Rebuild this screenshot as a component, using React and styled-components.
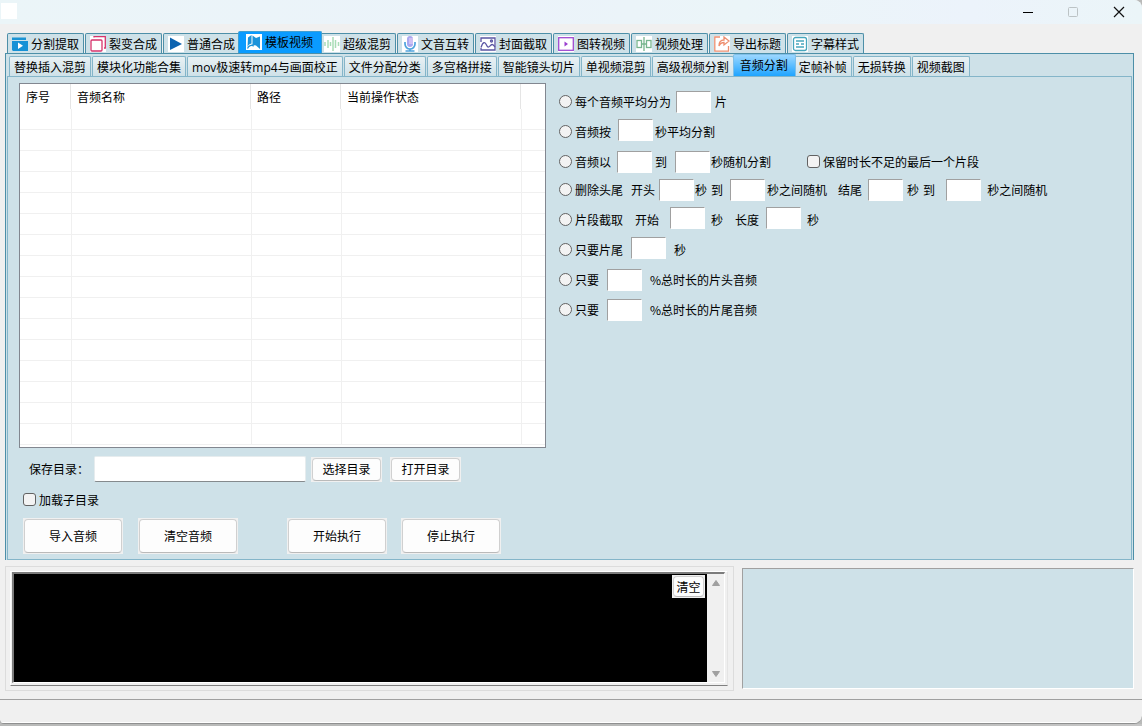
import React from "react";
import styled, { createGlobalStyle, css } from "styled-components";

const SURFACE = "#cee1e8";
const CHROME = "#f0f0f0";
const FRAME = "#4d8fa8";
const FRAME_SOFT = "#84b5c9";

const GlobalStyle = createGlobalStyle`
  *, *::before, *::after { box-sizing: border-box; }
  body {
    margin: 0;
    background: #b9bab9;
    color: #000;
    font: 12px/16px "Noto Sans CJK SC", sans-serif;
  }
  button, input { font: inherit; color: inherit; }
`;

const Screen = styled.div`
  min-height: 100vh;
  min-width: 1100px;
  display: flex;
  flex-direction: column;
`;

const Window = styled.div`
  flex: 1;
  display: flex;
  flex-direction: column;
  background: ${CHROME};
  border-radius: 0 8px 8px 4px;
  border-bottom: 1px solid #8f9090;
  overflow: hidden;
`;

const TitleBar = styled.header`
  display: flex;
  justify-content: space-between;
  height: 24px;
  background: linear-gradient(90deg, #ebf5f8, #ebf3fa 45%, #ebf5f8 65%, #ecf3fb 85%, #ebf5f8);
`;

const AppBadge = styled.span`
  width: 16px;
  height: 16px;
  margin: 3px 0 0 1px;
  background: #fff;
`;

const WindowControls = styled.div`
  display: flex;
`;

const WindowButton = styled.button`
  width: 46px;
  height: 23px;
  padding: 0;
  border: 0;
  background: none;
  display: grid;
  place-items: center;
`;

const Main = styled.main`
  flex: 1;
  display: flex;
  flex-direction: column;
  padding: 7px 8px 8px 5px;
`;

const TabBar = styled.div`
  display: flex;
  align-items: flex-end;
  gap: 1px;
  padding-left: 2px;
  height: 22px;
`;

const tabBase = css`
  display: flex;
  align-items: center;
  flex: none;
  white-space: nowrap;
  border-radius: 2px 2px 0 0;
  border-bottom: 0;
  position: relative;
`;

const MainTab = styled.button`
  ${tabBase}
  gap: 3px;
  width: 77px;
  height: 20px;
  padding: 0 4px;
  border: 1px solid ${FRAME};
  border-bottom: 0;
  background: ${SURFACE};
  ${(p) =>
    p.$active &&
    css`
      z-index: 1;
      width: 84px;
      height: 22px;
      margin: 0 -4px 0 -3px;
      padding: 0 7px 2px;
      background: #0a9bff;
      border-color: #3f9fd2;
    `}
`;

const SubTab = styled.button`
  ${tabBase}
  height: 20px;
  padding: 2px 4px 0;
  border: 1px solid ${FRAME_SOFT};
  border-bottom: 0;
  background: linear-gradient(#e9f1f4, ${SURFACE});
  font-family: "Open Sans", "Noto Sans CJK SC", sans-serif;
  ${(p) =>
    p.$active &&
    css`
      z-index: 1;
      height: 22px;
      margin: 0 -3px 0 -2px;
      padding: 0 7px 0 6px;
      background: linear-gradient(#9bd7ff, #1fa4ff);
      border-color: #7fbfe8;
    `}
`;

const TabIcon = styled.svg`
  flex: none;
  width: 16px;
  height: 16px;
  background: ${(p) => (p.$plain ? "transparent" : "#fff")};
`;

const OuterPanel = styled.section`
  border: 1px solid ${FRAME};
  border-bottom: 0;
  padding: 0 1px;
  background: ${SURFACE};
`;

const InnerPanel = styled.div`
  display: grid;
  grid-template-columns: 527fr 585fr;
  border: 1px solid ${FRAME_SOFT};
  padding: 6px 0 5px 11px;
`;

const ListColumn = styled.div`
  min-width: 0;
`;

const ListBox = styled.div`
  height: 365px;
  border: 1px solid #828790;
  background: #fff;
  overflow: hidden;
`;

const ListTable = styled.table`
  width: 100%;
  table-layout: fixed;
  border-collapse: separate;
  border-spacing: 0;

  th {
    height: 25px;
    padding: 0 6px;
    border-right: 1px solid #e5e5e5;
    font-weight: 400;
    text-align: left;
  }
  td {
    height: 21px;
    padding: 0;
    border-left: 1px solid #f0f0f0;
    border-bottom: 1px solid #f0f0f0;
  }
  th:last-child { border-right: 0; }
  td:first-child { border-left: 0; }
`;

const FormLine = styled.div`
  display: flex;
  align-items: center;
  margin-top: ${(p) => p.$top}px;
  padding-left: ${(p) => p.$indent}px;
`;

const FolderLabel = styled.label`
  width: 65px;
  white-space: nowrap;
`;

const FolderInput = styled.input`
  width: 212px;
  height: 26px;
  margin-right: 5px;
  padding: 0 6px;
  border: 1px solid #e6ecee;
  border-bottom-color: #858a8d;
  border-radius: 2px;
  background: #fff;
`;

const PushButton = styled.button`
  flex: none;
  width: ${(p) => (p.$large ? 100 : 71)}px;
  height: ${(p) => (p.$large ? 36 : 25)}px;
  margin-right: ${(p) => p.$after || 0}px;
  padding: 0;
  border: 1px solid ${CHROME};
  background: ${CHROME};

  span {
    display: grid;
    place-items: center;
    height: 100%;
    border: 1px solid #d0d0d0;
    border-bottom-color: #bababa;
    border-radius: 4px;
    background: #fdfdfd;
  }
`;

const Choice = styled.label`
  display: flex;
  align-items: center;
  gap: 3px;
  white-space: nowrap;
  margin-left: ${(p) => p.$before || 0}px;

  input {
    appearance: none;
    flex: none;
    width: 13px;
    height: 13px;
    margin: 0 0 1px;
    border: 1px solid #626262;
    border-radius: 3px;
    background: #f3f3f3;
  }
  input[type="radio"] { border-radius: 50%; }
  input:checked { box-shadow: inset 0 0 0 3px #f3f3f3; background: #0067c0; }
`;

const Options = styled.div`
  padding: 8px 0 0 13px;
`;

const NumberInput = styled.input`
  flex: none;
  width: 35px;
  height: 22px;
  margin-left: ${(p) => p.$before}px;
  padding: 0 2px;
  border: 1px solid #fff;
  border-top-color: #a0a0a0;
  border-left-color: #a0a0a0;
  background: #fff;
`;

const OptionRow = styled.div`
  display: flex;
  align-items: center;
  height: 22px;
  margin-bottom: ${(p) => (p.$tight ? 6 : 8)}px;
  ${(p) => p.$raised && css`
    ${NumberInput} { margin-bottom: 4px; }
  `}
`;

const Unit = styled.span`
  white-space: nowrap;
  margin-left: ${(p) => p.$before}px;
`;

const BottomArea = styled.div`
  flex: 1;
  display: grid;
  grid-template-columns: 729fr 392fr;
  gap: 8px;
  margin-top: 6px;
`;

const LogGroup = styled.section`
  display: flex;
  border: 1px solid #dcdcdc;
  padding: 4px 5px 4px 4px;
`;

const LogFrame = styled.div`
  flex: 1;
  display: flex;
  border: 1px solid #fff;
  border-right-color: #e4e4e4;
  border-bottom-color: #808080;
  padding: 0 2px 2px 1px;
`;

const LogBox = styled.div`
  flex: 1;
  display: flex;
  border: 2px solid #7c7c7c;
  border-right: 1px solid #fff;
  border-bottom: 1px solid #fff;
`;

const LogOutput = styled.div`
  flex: 1;
  display: flex;
  justify-content: flex-end;
  align-items: flex-start;
  min-height: 106px;
  padding: 1px 2px;
  background: #000;
`;

const ClearButton = styled(PushButton)`
  width: 33px;
  height: 23px;
`;

const ScrollBar = styled.div`
  width: 17px;
  display: flex;
  flex-direction: column;
  justify-content: space-between;
  align-items: center;
  padding: 5px 0 4px;
  background: ${CHROME};
`;

const SidePanel = styled.aside`
  margin: 2px 0;
  border: 1px solid #fff;
  border-top-color: #a0a0a0;
  border-left-color: #a0a0a0;
  background: ${SURFACE};
`;

const StatusBar = styled.footer`
  height: 24px;
  border-top: 1px solid #a0a0a0;
  border-bottom: 1px solid #fff;
`;

const Desktop = styled.div`
  height: 2px;
  background: linear-gradient(90deg, #b9bab9 70%, #c6c6c6);
`;

const ICONS = {
  split: (
    <>
      <path d="M0 4V2l1-1 1 1 1-1 1 1 1-1 1 1 1-1 1 1 1-1 1 1 1-1 1 1 1-1 1 1v2z" fill="#1b93d3" />
      <path d="M0 5h16v10H1l-1-1z" fill="#1691d6" />
      <path d="M6 6.500l5 3.300-5 3.300z" fill="#fff" />
    </>
  ),
  fission: (
    <g fill="none" stroke="#d6336c" strokeWidth="1.300">
      <rect x="1" y="4" width="11" height="11" rx="1" />
      <path d="M4 1.500V.7h11.300v11.300H14" />
    </g>
  ),
  play: <path d="M2 1.500v12.500L14 8z" fill="#0c63b0" />,
  template: (
    <>
      <path d="M2 3.500L5.500 1v8.500C3.500 10 2 11 1.500 13z" fill="#1b93da" />
      <path d="M6.500 1.500L10 4l4-1.500V15l-4-3.500L5 10.500l1.500-.5z" fill="#1b93da" />
      <path d="M1.500 14.500c1-3 4-4 6.500-2.500" fill="none" stroke="#1b93da" strokeWidth="1.200" />
    </>
  ),
  wave: (
    <path d="M1 6v4M4 4v8M6.500 6v4M9 1v14M11.500 4v8M14.500 6v4" fill="none" stroke="#a9dcb6" strokeWidth="1.500" />
  ),
  mic: (
    <>
      <rect x="5" y="0" width="6" height="11" rx="3" fill="#aaa8f0" />
      <path d="M7 3h4M7 5h4M7 7h4" stroke="#f4d8f5" strokeWidth="1" />
      <path d="M3 6v2a5 5 0 0 0 10 0V6M8 13v2M3.500 15h9" fill="none" stroke="#4fa3dd" strokeWidth="1.700" />
    </>
  ),
  image: (
    <g fill="none" stroke="#5a55a3" strokeWidth="1.300">
      <path d="M1 6V2h14v12H1v-2" />
      <path d="M1 11.500c2-6 4-6 5.500-2.500S9 11 10.500 9.500 13 8 15 11" />
      <circle cx="11.500" cy="5" r="1" />
    </g>
  ),
  frameVideo: (
    <>
      <rect x=".7" y="1.700" width="14.600" height="12.600" fill="none" stroke="#a04ad0" strokeWidth="1.300" />
      <path d="M6.500 5.500L10 8l-3.500 2.500z" fill="#9b3fcf" />
    </>
  ),
  process: (
    <g fill="none" stroke="#78b58e" strokeWidth="1.300">
      <rect x="1" y="4.500" width="4.500" height="7" />
      <rect x="10.500" y="4.500" width="4.500" height="7" />
      <path d="M8 1v14M5.500 8h5" />
    </g>
  ),
  exportTitle: (
    <g fill="none" stroke="#ee8f70" strokeWidth="1.300">
      <path d="M6 1H.8v14.200h13.700V10" />
      <path d="M5 10c0-4 2-6 5-6V1l5 4-5 4V6.500C8 6.500 6 7.500 5 10z" />
    </g>
  ),
  subtitle: (
    <g fill="none" stroke="#47a6bd" strokeWidth="1.300">
      <rect x="1.500" y="1.500" width="13" height="13" rx="2" />
      <path d="M4 5h8M4 8h3M9 8h3M4 11h8" />
    </g>
  ),
};

const MAIN_TABS = [
  ["分割提取", "split", true],
  ["裂变合成", "fission"],
  ["普通合成", "play"],
  ["模板视频", "template"],
  ["超级混剪", "wave"],
  ["文音互转", "mic"],
  ["封面截取", "image"],
  ["图转视频", "frameVideo"],
  ["视频处理", "process"],
  ["导出标题", "exportTitle"],
  ["字幕样式", "subtitle"],
];

const SUB_TABS = [
  "替换插入混剪",
  "模块化功能合集",
  "mov极速转mp4与画面校正",
  "文件分配分类",
  "多宫格拼接",
  "智能镜头切片",
  "单视频混剪",
  "高级视频分割",
  "音频分割",
  "定帧补帧",
  "无损转换",
  "视频截图",
];

const COLUMNS = ["序号", "音频名称", "路径", "当前操作状态", ""];

function Mode({ children }) {
  return (
    <Choice>
      <input type="radio" name="mode" />
      {children}
    </Choice>
  );
}

function Button({ children, ...rest }) {
  return (
    <PushButton type="button" {...rest}>
      <span>{children}</span>
    </PushButton>
  );
}

function SplitOptions() {
  return (
    <Options>
      <OptionRow>
        <Mode>每个音频平均分为</Mode>
        <NumberInput $before={5} aria-label="片数" />
        <Unit $before={4}>片</Unit>
      </OptionRow>
      <OptionRow $raised>
        <Mode>音频按</Mode>
        <NumberInput $before={7} aria-label="每段秒数" />
        <Unit $before={2}>秒平均分割</Unit>
      </OptionRow>
      <OptionRow $tight>
        <Mode>音频以</Mode>
        <NumberInput $before={6} aria-label="最短秒数" />
        <Unit $before={3}>到</Unit>
        <NumberInput $before={8} aria-label="最长秒数" />
        <Unit $before={1}>秒随机分割</Unit>
        <Choice $before={36}>
          <input type="checkbox" />
          保留时长不足的最后一个片段
        </Choice>
      </OptionRow>
      <OptionRow>
        <Mode>删除头尾</Mode>
        <Unit $before={8}>开头</Unit>
        <NumberInput $before={4} aria-label="开头最短秒数" />
        <Unit $before={1}>秒</Unit>
        <Unit $before={4}>到</Unit>
        <NumberInput $before={7} aria-label="开头最长秒数" />
        <Unit $before={2}>秒之间随机</Unit>
        <Unit $before={11}>结尾</Unit>
        <NumberInput $before={6} aria-label="结尾最短秒数" />
        <Unit $before={4}>秒</Unit>
        <Unit $before={4}>到</Unit>
        <NumberInput $before={11} aria-label="结尾最长秒数" />
        <Unit $before={6}>秒之间随机</Unit>
      </OptionRow>
      <OptionRow $raised>
        <Mode>片段截取</Mode>
        <Unit $before={12}>开始</Unit>
        <NumberInput $before={11} aria-label="开始秒数" />
        <Unit $before={6}>秒</Unit>
        <Unit $before={12}>长度</Unit>
        <NumberInput $before={7} aria-label="长度秒数" />
        <Unit $before={6}>秒</Unit>
      </OptionRow>
      <OptionRow $raised>
        <Mode>只要片尾</Mode>
        <NumberInput $before={8} aria-label="片尾秒数" />
        <Unit $before={8}>秒</Unit>
      </OptionRow>
      <OptionRow>
        <Mode>只要</Mode>
        <NumberInput $before={8} aria-label="片头百分比" />
        <Unit $before={8}>%总时长的片头音频</Unit>
      </OptionRow>
      <OptionRow>
        <Mode>只要</Mode>
        <NumberInput $before={8} aria-label="片尾百分比" />
        <Unit $before={8}>%总时长的片尾音频</Unit>
      </OptionRow>
    </Options>
  );
}

function AudioList() {
  return (
    <ListBox>
      <ListTable>
        <colgroup>
          <col style={{ width: 51 }} />
          <col style={{ width: 180 }} />
          <col style={{ width: 90 }} />
          <col style={{ width: 180 }} />
          <col />
        </colgroup>
        <thead>
          <tr>
            {COLUMNS.map((c, i) => (
              <th key={i} scope="col">{c}</th>
            ))}
          </tr>
        </thead>
        <tbody>
          {Array.from({ length: 16 }, (_, r) => (
            <tr key={r}>
              {COLUMNS.map((_, i) => (
                <td key={i} />
              ))}
            </tr>
          ))}
        </tbody>
      </ListTable>
    </ListBox>
  );
}

export default function App() {
  return (
    <Screen>
      <GlobalStyle />
      <Window>
        <TitleBar>
          <AppBadge />
          <WindowControls>
            <WindowButton aria-label="最小化">
              <svg width="12" height="12"><path d="M2 6.500h10" stroke="#000" /></svg>
            </WindowButton>
            <WindowButton aria-label="最大化" disabled>
              <svg width="12" height="12"><rect x="1.500" y="1.500" width="9" height="9" rx="1" fill="none" stroke="#bcc3c5" /></svg>
            </WindowButton>
            <WindowButton aria-label="关闭">
              <svg width="12" height="12"><path d="M1 1l10 10M11 1L1 11" stroke="#111" strokeWidth="1.200" /></svg>
            </WindowButton>
          </WindowControls>
        </TitleBar>

        <Main>
          <TabBar role="tablist">
            {MAIN_TABS.map(([label, icon, plain]) => (
              <MainTab key={label} type="button" role="tab" $active={label === "模板视频"} aria-selected={label === "模板视频"}>
                <TabIcon viewBox="0 0 16 16" $plain={plain} aria-hidden="true">{ICONS[icon]}</TabIcon>
                {label}
              </MainTab>
            ))}
          </TabBar>

          <OuterPanel>
            <TabBar role="tablist">
              {SUB_TABS.map((label) => (
                <SubTab key={label} type="button" role="tab" $active={label === "音频分割"} aria-selected={label === "音频分割"}>
                  {label}
                </SubTab>
              ))}
            </TabBar>
            <InnerPanel>
              <ListColumn>
                <AudioList />
                <FormLine $top={8} $indent={10}>
                  <FolderLabel htmlFor="folder">保存目录：</FolderLabel>
                  <FolderInput id="folder" />
                  <Button $after={8}>选择目录</Button>
                  <Button>打开目录</Button>
                </FormLine>
                <FormLine $top={10} $indent={4}>
                  <Choice>
                    <input type="checkbox" />
                    加载子目录
                  </Choice>
                </FormLine>
                <FormLine $top={10} $indent={4}>
                  <Button $large $after={15}>导入音频</Button>
                  <Button $large $after={49}>清空音频</Button>
                  <Button $large $after={14}>开始执行</Button>
                  <Button $large>停止执行</Button>
                </FormLine>
              </ListColumn>
              <SplitOptions />
            </InnerPanel>
          </OuterPanel>

          <BottomArea>
            <LogGroup>
              <LogFrame>
                <LogBox>
                  <LogOutput>
                    <ClearButton type="button"><span>清空</span></ClearButton>
                  </LogOutput>
                  <ScrollBar>
                    <svg width="10" height="8"><path d="M5 1.500l3.500 5h-7z" fill="#a0a0a0" stroke="#a0a0a0" strokeLinejoin="round" /></svg>
                    <svg width="10" height="8"><path d="M5 6.500L1.500 1.500h7z" fill="#a0a0a0" stroke="#a0a0a0" strokeLinejoin="round" /></svg>
                  </ScrollBar>
                </LogBox>
              </LogFrame>
            </LogGroup>
            <SidePanel />
          </BottomArea>
        </Main>
        <StatusBar />
      </Window>
      <Desktop />
    </Screen>
  );
}
